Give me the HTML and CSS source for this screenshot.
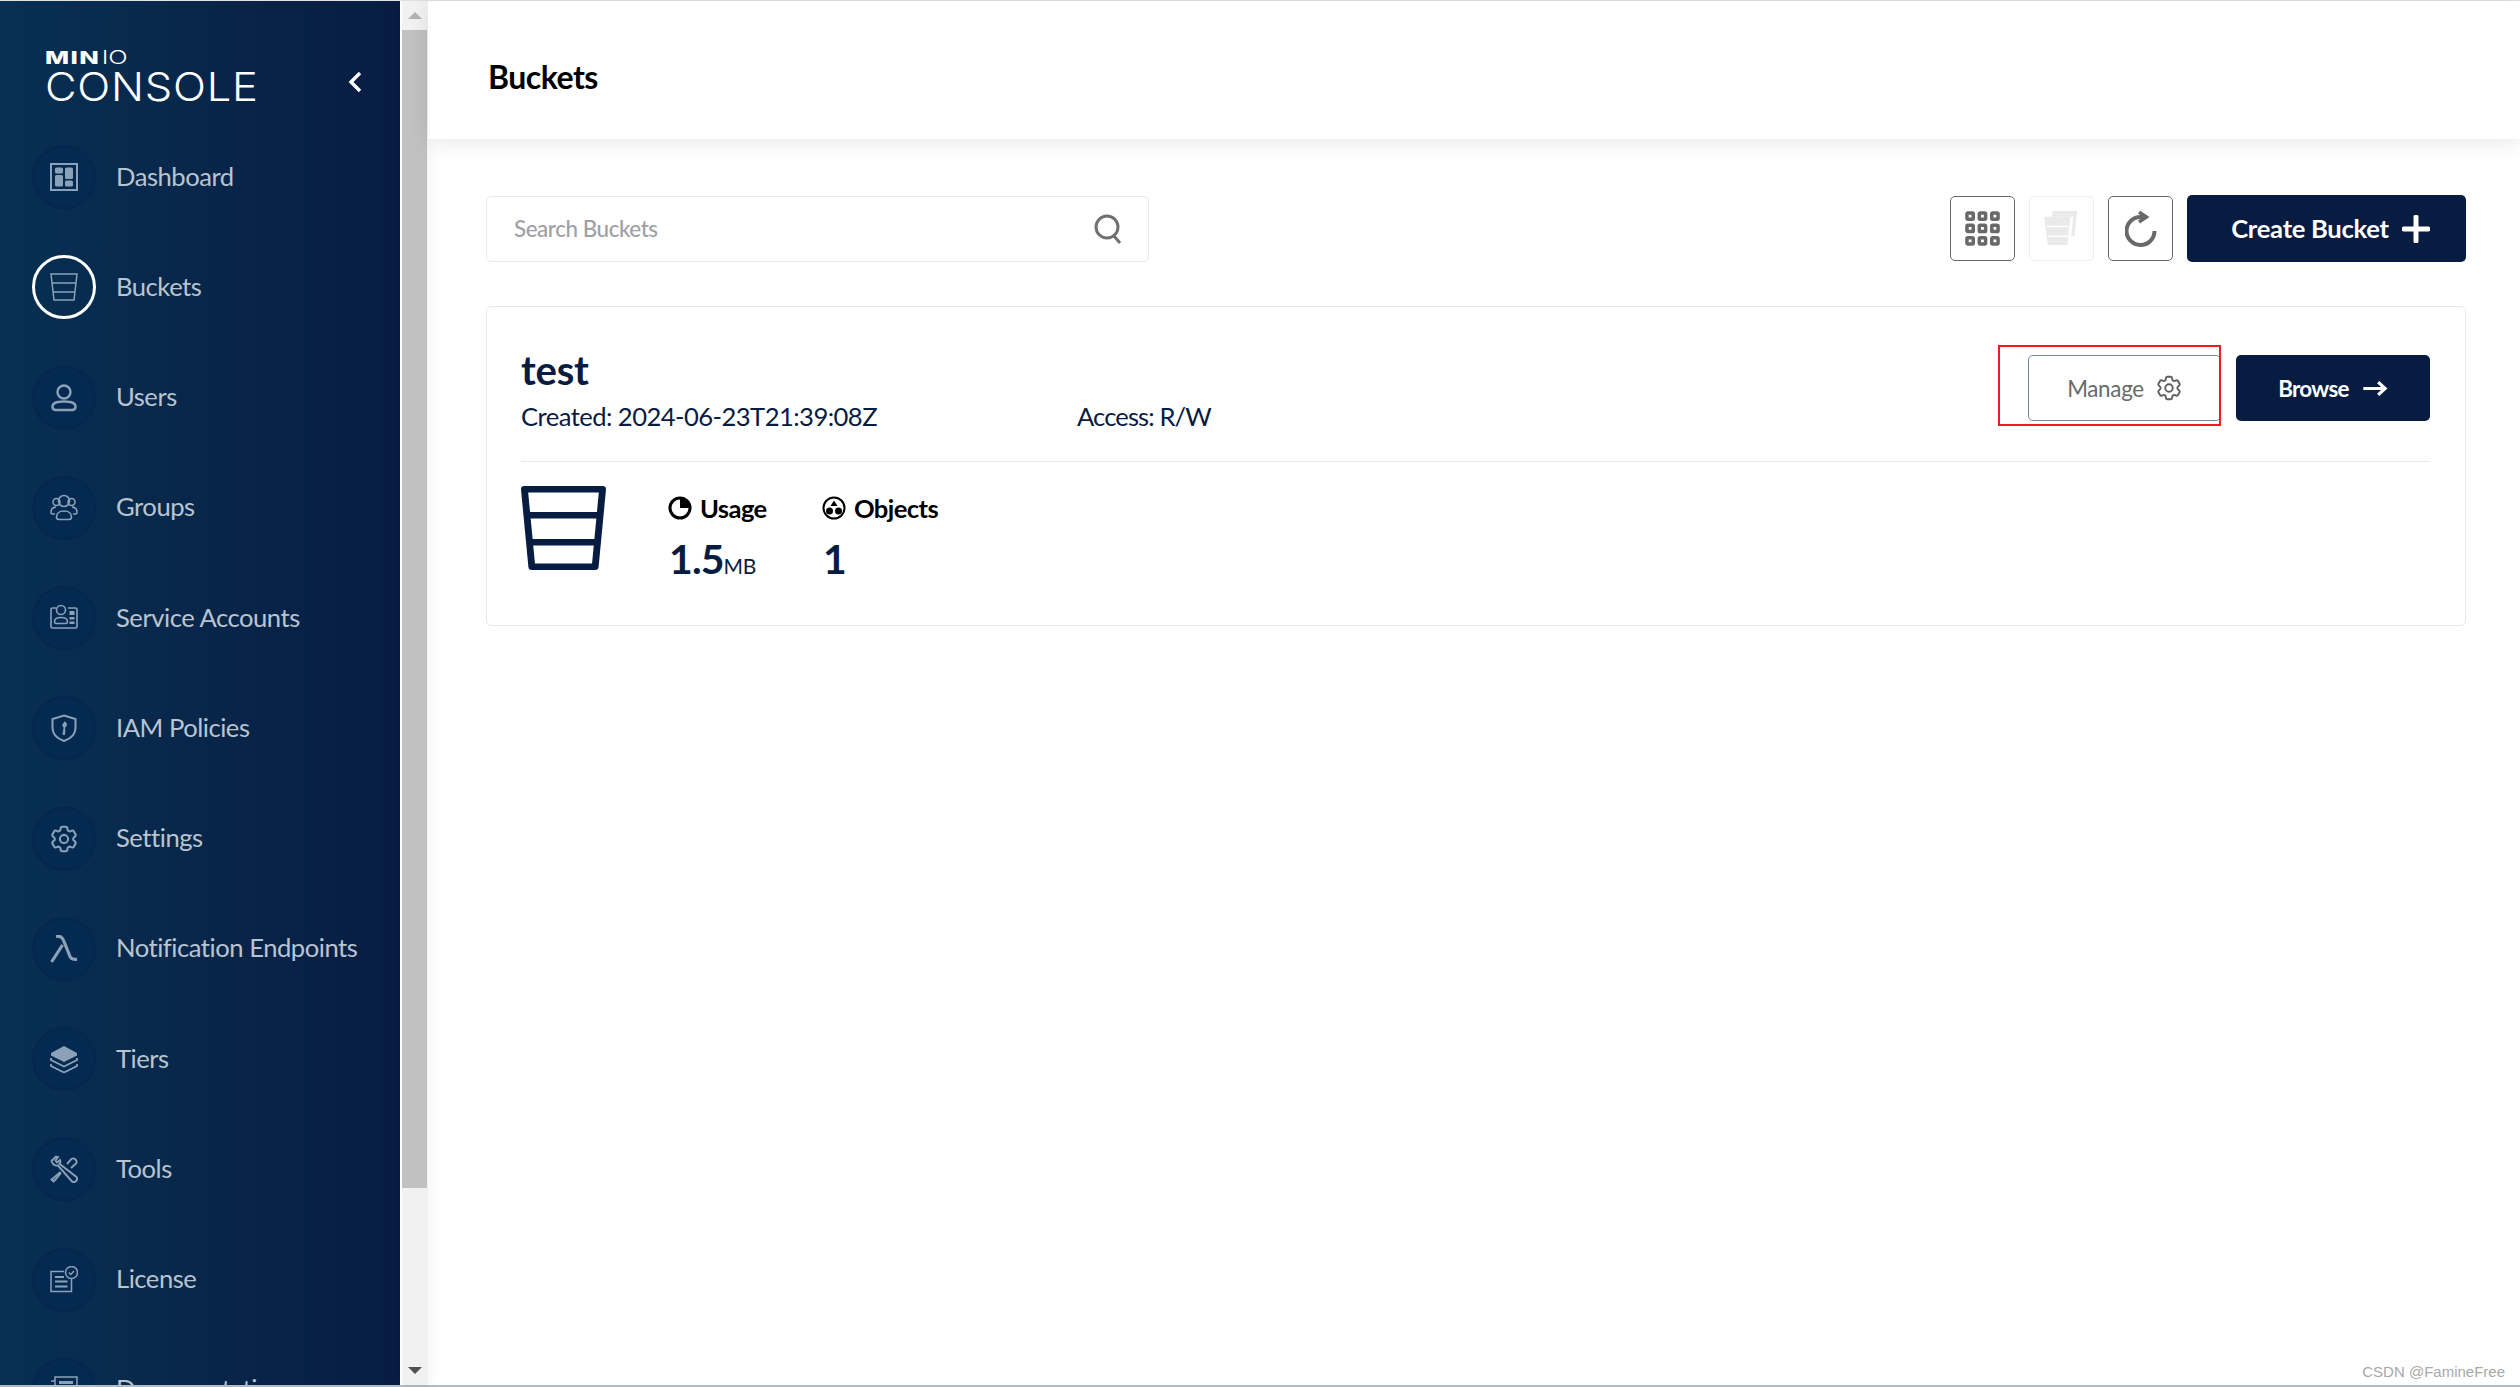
FILE: index.html
```html
<!DOCTYPE html>
<html lang="en">
<head>
<meta charset="utf-8">
<title>MinIO Console - Buckets</title>
<link rel="stylesheet" href="styles.css">
</head>
<body>
<svg class="defs" width="0" height="0">
  <symbol id="gear" viewBox="0 0 24 24"><path d="M9.594 3.94c.09-.542.56-.94 1.11-.94h2.593c.55 0 1.02.398 1.11.94l.213 1.281c.063.374.313.686.645.87.074.04.147.083.22.127.325.196.72.257 1.075.124l1.217-.456a1.125 1.125 0 0 1 1.37.49l1.296 2.247a1.125 1.125 0 0 1-.26 1.431l-1.003.827c-.293.241-.438.613-.43.992a7.723 7.723 0 0 1 0 .255c-.008.378.137.75.43.991l1.004.827c.424.35.534.955.26 1.43l-1.298 2.247a1.125 1.125 0 0 1-1.369.491l-1.217-.456c-.355-.133-.75-.072-1.076.124a6.47 6.47 0 0 1-.22.128c-.331.183-.581.495-.644.869l-.213 1.281c-.09.543-.56.94-1.11.94h-2.594c-.55 0-1.019-.398-1.11-.94l-.213-1.281c-.062-.374-.312-.686-.644-.87a6.52 6.52 0 0 1-.22-.127c-.325-.196-.72-.257-1.076-.124l-1.217.456a1.125 1.125 0 0 1-1.369-.49l-1.297-2.247a1.125 1.125 0 0 1 .26-1.431l1.004-.827c.292-.24.437-.613.43-.991a6.932 6.932 0 0 1 0-.255c.007-.38-.138-.751-.43-.992l-1.004-.827a1.125 1.125 0 0 1-.26-1.43l1.297-2.247a1.125 1.125 0 0 1 1.37-.491l1.216.456c.356.133.751.072 1.076-.124.072-.044.146-.086.22-.128.332-.183.582-.495.644-.869l.214-1.28Z" fill="none" stroke="currentColor" stroke-width="1.5"/><circle cx="12" cy="12" r="3" fill="none" stroke="currentColor" stroke-width="1.5"/></symbol>
</svg>
<div class="topline"></div>
<div class="app">
  <aside class="sidebar">
    <div class="brand">
      <div class="logo">
        <div class="logo-min"><b>MIN</b><i>IO</i></div>
        <div class="logo-console">CONSOLE</div>
      </div>
      <svg class="collapse" viewBox="0 0 14 22"><path d="M12 2 3 11l9 9" fill="none" stroke="#fff" stroke-width="3.4"/></svg>
    </div>
    <nav class="nav">
      <a class="item"><span class="circle"><svg viewBox="0 0 28 28"><rect x="1" y="1" width="26" height="26" fill="none" stroke="currentColor" stroke-width="2"/><rect x="5" y="4.500" width="8" height="6" rx="1.500" fill="currentColor"/><rect x="5" y="12" width="8" height="11.500" rx="1.500" fill="currentColor"/><rect x="15" y="4.500" width="8" height="11.500" rx="1.500" fill="currentColor"/><rect x="15" y="17.500" width="8" height="6" rx="1.500" fill="currentColor"/></svg></span><span class="label">Dashboard</span></a>
      <a class="item active"><span class="circle"><svg viewBox="0 0 28 28"><path d="M1 1h26l-3 26H4ZM2 10h24M3 19h22" fill="none" stroke="currentColor" stroke-width="1.500"/></svg></span><span class="label">Buckets</span></a>
      <a class="item"><span class="circle"><svg viewBox="0 0 28 28"><circle cx="14" cy="8" r="6.500" fill="none" stroke="currentColor" stroke-width="2.400"/><path d="M2.500 22.500c0-3.500 5-5 11.500-5s11.500 1.500 11.500 5c0 2.500-1.500 3.500-3.500 3.500H6c-2 0-3.500-1-3.500-3.500Z" fill="none" stroke="currentColor" stroke-width="2.400"/></svg></span><span class="label">Users</span></a>
      <a class="item"><span class="circle"><svg viewBox="0 0 28 28"><g fill="none" stroke="currentColor" stroke-width="1.600"><circle cx="14" cy="7" r="5.500"/><circle cx="6.500" cy="8" r="3.500"/><circle cx="21.500" cy="8" r="3.500"/><path d="M6.500 23c0-3.500 3-6 7.500-6s7.500 2.500 7.500 6c0 1.500-1 2.500-2.500 2.500H9c-1.500 0-2.500-1-2.500-2.500Z"/><path d="M6 13c-3 .2-5 2.500-5 5.500 0 1 .8 1.500 1.500 1.500H5M22 13c3 .2 5 2.500 5 5.500 0 1-.8 1.500-1.500 1.500H23"/></g></svg></span><span class="label">Groups</span></a>
      <a class="item"><span class="circle"><svg viewBox="0 0 28 28"><g fill="none" stroke="currentColor" stroke-width="1.600"><path d="M6 4H2.500C1.500 4 1 4.500 1 5.500v17C1 23.500 1.500 24 2.500 24h23c1 0 1.500-.5 1.500-1.500v-17c0-1-.5-1.500-1.500-1.500H18"/><circle cx="11" cy="6" r="4.500"/><path d="M4.500 17.500c0-2.500 2.500-4 6.500-4s6.500 1.500 6.500 4c0 1-.6 2-2 2H6.500c-1.400 0-2-1-2-2Z"/></g><rect x="19.500" y="7" width="5" height="4" fill="currentColor"/><rect x="19.500" y="13" width="5" height="2.500" fill="currentColor"/><rect x="19.500" y="17.500" width="5" height="2.500" fill="currentColor"/></svg></span><span class="label">Service Accounts</span></a>
      <a class="item"><span class="circle"><svg viewBox="0 0 28 28"><path d="M14 1.500 25.500 5v9c0 6-4.500 10.500-11.500 13C7 24.500 2.500 20 2.500 14V5Z" fill="none" stroke="currentColor" stroke-width="2"/><path d="M14 7.500a3 3 0 0 1 2.200 5l-1 1V20l-1.200 1.500-1.500-1.500v-1.500l1-1-1-1 1-1v-2a3 3 0 0 1 .5-5Z" fill="currentColor"/></svg></span><span class="label">IAM Policies</span></a>
      <a class="item"><span class="circle"><svg viewBox="0 0 28 28"><use href="#gear" x="-2.400" y="-2.400" width="32.800" height="32.800"/></svg></span><span class="label">Settings</span></a>
      <a class="item"><span class="circle"><svg viewBox="0 0 28 28"><path d="M6 1.500c5-.8 6.500 1 8 5l6 15c1 2.700 3 3 7 2.800M12.500 10 1.500 27" fill="none" stroke="currentColor" stroke-width="3.200"/></svg></span><span class="label">Notification Endpoints</span></a>
      <a class="item"><span class="circle"><svg viewBox="0 0 28 28"><path d="M14 1 27 8v2.500L14 17 1 10.500V8Z" fill="currentColor"/><path d="M1 13v2l13 6.500L27 15v-2M1 19v2l13 6.500L27 21v-2" fill="none" stroke="currentColor" stroke-width="1.800"/></svg></span><span class="label">Tiers</span></a>
      <a class="item"><span class="circle"><svg viewBox="0 0 28 28"><g fill="none" stroke="currentColor" stroke-width="1.900"><path d="M1.500 6 6 1.500l2 .5-2.500 3.500L7 7.500l3-2.500c.5 1.500.3 3-.5 3.800L26.500 22c.800 1 .8 2.500 0 3.500l-1 1c-1 .8-2.500.8-3.500 0L8 10.500C5.500 11 3 10 1.500 6Z"/><path d="M17 9 21 4.500c1-1.500 3-1.500 4.500 0s1.500 3.500 0 4.500L21 13M10.500 17 4 22.500l-2.500 2 2 2 2-2L11 18"/></g></svg></span><span class="label">Tools</span></a>
      <a class="item"><span class="circle"><svg viewBox="0 0 28 28"><g fill="none" stroke="currentColor" stroke-width="1.500"><path d="M14 5.500H1v20h20.500V13"/><circle cx="21.500" cy="6.500" r="6"/><path d="m18.800 6.500 2 2 3.200-3.500"/></g><rect x="5" y="10" width="9" height="2" fill="currentColor"/><rect x="5" y="14.500" width="12.500" height="2" fill="currentColor"/><rect x="5" y="19.500" width="12.500" height="2" fill="currentColor"/></svg></span><span class="label">License</span></a>
      <a class="item"><span class="circle"><svg viewBox="0 0 28 28"><g fill="none" stroke="currentColor" stroke-width="1.500"><path d="M1 5h4v21h22V1H5v5"/></g><rect x="9" y="5" width="14" height="3" fill="currentColor"/></svg></span><span class="label">Documentation</span></a>
    </nav>
  </aside>
  <div class="rail">
    <div class="rail-btn"><span class="tri-up"></span></div>
    <div class="rail-thumb"></div>
    <div class="rail-rest"></div>
    <div class="rail-btn"><span class="tri-down"></span></div>
  </div>
  <main class="main">
    <header class="header"><h1 class="title">Buckets</h1></header>
    <section class="toolbar">
      <div class="search">
        <span class="placeholder">Search Buckets</span>
        <svg class="search-icon" viewBox="0 0 28 30"><circle cx="13" cy="13" r="11" fill="none" stroke="#707070" stroke-width="3"/><path d="m20 22 6 7" fill="none" stroke="#707070" stroke-width="3"/></svg>
      </div>
      <div class="actions">
        <button class="icon-btn"><svg class="ico-grid" viewBox="0 0 36 36"><g fill="none" stroke="#696969" stroke-width="3.600"><rect x="2" y="2" width="6.500" height="6.500" rx="1"/><rect x="14.700" y="2" width="6.500" height="6.500" rx="1"/><rect x="27.500" y="2" width="6.500" height="6.500" rx="1"/><rect x="2" y="14.700" width="6.500" height="6.500" rx="1"/><rect x="14.700" y="14.700" width="6.500" height="6.500" rx="1"/><rect x="27.500" y="14.700" width="6.500" height="6.500" rx="1"/><rect x="2" y="27.500" width="6.500" height="6.500" rx="1"/><rect x="14.700" y="27.500" width="6.500" height="6.500" rx="1"/><rect x="27.500" y="27.500" width="6.500" height="6.500" rx="1"/></g></svg></button>
        <button class="icon-btn disabled"><svg class="ico-multi" viewBox="0 0 36 36"><path d="M9 0h25l-2.500 26H28L30 6H8Z" fill="#eaeaea"/><path d="M0 6h27l-3 29H4Z" fill="#eaeaea"/><path d="M3 16h22M4 26h20" stroke="#fff" stroke-width="1.600"/></svg></button>
        <button class="icon-btn"><svg class="ico-refresh" viewBox="0 0 32 36"><path d="M29.500 20A14 14 0 1 1 16 6h5" fill="none" stroke="#696969" stroke-width="4"/><path d="m14 1 7.500 5-7.500 5" fill="none" stroke="#696969" stroke-width="3.400"/></svg></button>
        <button class="primary create"><span>Create Bucket</span><svg class="ico-plus" viewBox="0 0 28 28"><path d="M14 2v24M2 14h24" stroke="#fff" stroke-width="5" stroke-linecap="round"/></svg></button>
      </div>
    </section>
    <article class="card">
      <div class="card-head">
        <div class="card-info">
          <h2 class="bucket-name">test</h2>
          <div class="meta"><span class="meta-created">Created: 2024-06-23T21:39:08Z</span><span class="meta-access">Access: R/W</span></div>
        </div>
        <div class="card-actions">
          <button class="manage"><span>Manage</span><svg class="ico-gear"><use href="#gear"/></svg></button>
          <button class="primary browse"><span>Browse</span><svg class="ico-arrow" viewBox="0 0 24 16"><path d="M1 8h20M15 2l6.500 6-6.500 6" fill="none" stroke="#fff" stroke-width="3"/></svg></button>
        </div>
      </div>
      <div class="card-stats">
        <svg class="big-bucket" viewBox="1.750 .75 80.500 82.500" preserveAspectRatio="none"><path d="M5 4h74l-7 76H12ZM7 29.500h70M9.500 56h65" fill="none" stroke="#081C42" stroke-width="6.500" stroke-linejoin="round"/></svg>
        <div class="stat stat-usage">
          <div class="stat-label"><svg class="stat-ico" viewBox="0 0 24 24"><circle cx="12" cy="12" r="10" fill="none" stroke="#000" stroke-width="3"/><path d="M12 2v10h10A10 10 0 0 0 12 2Z" fill="#000"/></svg><span>Usage</span></div>
          <div class="stat-value">1.5<small>MB</small></div>
        </div>
        <div class="stat">
          <div class="stat-label"><svg class="stat-ico" viewBox="0 0 24 24"><circle cx="12" cy="12" r="10.500" fill="none" stroke="#000" stroke-width="2"/><path d="m12 4.500 3.500 5.500h-7Z" fill="#000"/><circle cx="7.500" cy="15" r="3.500" fill="#000"/><circle cx="16.500" cy="15" r="3.500" fill="#000"/></svg><span>Objects</span></div>
          <div class="stat-value">1</div>
        </div>
      </div>
    </article>
  </main>
</div>
<div class="bottomline"></div>
<div class="highlight"></div>
<div class="watermark">CSDN @FamineFree</div>
</body>
</html>
```
FILE: styles.css
```css
* { box-sizing: border-box; }
html, body { margin: 0; height: 100%; overflow: hidden; }
body {
  display: flex;
  flex-direction: column;
  font-family: "Lato", "Liberation Sans", sans-serif;
  background: #fff;
  color: #081c42;
  position: relative;
}
.defs { position: absolute; }
.topline { height: 1px; background: #e2e2e2; flex: none; }
.bottomline { height: 2px; background: #b0b9c6; flex: none; }
.app { flex: 1; display: flex; min-height: 0; }

.sidebar {
  width: 400px;
  flex: none;
  background: linear-gradient(90deg, #073052 0%, #081c42 100%);
  overflow: hidden;
}
.brand {
  height: 121px;
  padding: 49px 38px 0 45px;
  display: flex;
  justify-content: space-between;
  align-items: flex-start;
}
.logo { color: #fff; }
.logo-min {
  font-family: "Inter", sans-serif;
  font-size: 18px;
  line-height: 15px;
  height: 15px;
  transform: scaleX(1.42);
  transform-origin: left center;
  white-space: nowrap;
}
.logo-min b { font-weight: 800; letter-spacing: 1px; }
.logo-min i { font-style: normal; font-weight: 300; margin-left: 1px; }
.logo-console {
  font-family: "Inter", sans-serif;
  font-weight: 300;
  font-size: 40px;
  line-height: 42px;
  margin-top: 1px;
  letter-spacing: .7px;
  transform: scaleX(1.085);
  transform-origin: left center;
}
.collapse { width: 14px; height: 22px; margin-top: 21px; }
.item {
  height: 110.25px;
  display: flex;
  align-items: center;
  padding-left: 32px;
  gap: 20px;
}
.circle {
  width: 64px;
  height: 64px;
  flex: none;
  border-radius: 50%;
  background: #042a52;
  border: 2px solid #05264d;
  display: flex;
  align-items: center;
  justify-content: center;
  color: #8ba1b8;
}
.circle svg { width: 28px; height: 28px; display: block; }
.item.active .circle { border: 3px solid #fff; background: transparent; }
.label { font-size: 25.6px; color: #b9c4d1; letter-spacing: -.47px; white-space: nowrap; margin-bottom: 3px; }

.rail {
  width: 28px;
  flex: none;
  display: flex;
  flex-direction: column;
  background: #f1f1f1;
  border-left: 2px solid #fff;
  box-shadow: 4px 0 12px rgba(0, 0, 0, .04);
  position: relative;
}
.rail-btn { height: 29px; display: flex; align-items: center; justify-content: center; flex: none; }
.rail-thumb { height: 1158px; width: 25px; background: #c1c1c1; flex: none; }
.rail-rest { flex: 1; }
.tri-up { border: 7px solid transparent; border-top: 0; border-bottom: 7px solid #b4b4b4; }
.tri-down { border: 7px solid transparent; border-bottom: 0; border-top: 7px solid #505050; }

.main { flex: 1; min-width: 0; display: flex; flex-direction: column; padding: 0 54px 0 58px; }
.header {
  height: 138px;
  margin: 0 -54px 0 -58px;
  padding: 12px 0 0 60px;
  background: #fff;
  box-shadow: 0 4px 20px rgba(0, 0, 0, .09);
  display: flex;
  align-items: center;
  position: relative;
  flex: none;
}
.title { margin: 0; font-size: 32px; font-weight: 700; color: #000; letter-spacing: -.5px; }
.toolbar {
  margin-top: 56px;
  display: flex;
  justify-content: space-between;
  align-items: center;
  height: 67px;
}
.search {
  width: 663px;
  height: 66px;
  border: 1px solid #eaeaea;
  border-radius: 5px;
  padding: 0 28px 0 27px;
  display: flex;
  align-items: center;
  justify-content: space-between;
}
.placeholder { font-size: 22.4px; font-weight: 500; color: #a0a0a4; letter-spacing: -.45px; }
.search-icon { width: 28px; height: 30px; margin-right: -2px; }
.actions { display: flex; align-items: center; }
.icon-btn {
  width: 65px;
  height: 65px;
  margin-right: 14px;
  padding: 0;
  background: #fff;
  border: 1px solid #696969;
  border-radius: 5px;
  display: flex;
  align-items: center;
  justify-content: center;
}
.icon-btn.disabled { border-color: #eeeeee; }
.ico-grid { width: 35px; height: 35px; }
.ico-multi { width: 35px; height: 35px; }
.ico-refresh { width: 32px; height: 36px; }
.primary {
  background: #081c42;
  color: #fff;
  border: 0;
  border-radius: 5px;
  font-family: inherit;
  display: flex;
  align-items: center;
  justify-content: center;
  padding: 0;
}
.create { width: 279px; height: 67px; padding-left: 8px; font-size: 25.6px; font-weight: 700; gap: 13px; letter-spacing: -.3px; }
.create span { margin-bottom: 2px; }
.ico-plus { width: 28px; height: 28px; }

.card {
  margin-top: 44px;
  height: 320px;
  border: 1px solid #e8e8e8;
  border-radius: 5px;
  padding: 0 35px 0 34px;
}
.card-head {
  height: 155px;
  border-bottom: 1px solid #eaeaea;
  display: flex;
  justify-content: space-between;
  align-items: flex-start;
}
.bucket-name { margin: 39px 0 0; font-size: 40px; line-height: 48px; font-weight: 700; letter-spacing: -.2px; }
.meta { font-size: 25.6px; line-height: 38px; display: flex; margin-top: 3px; letter-spacing: -.55px; }
.meta-created { width: 556px; }
.meta-access { letter-spacing: -.9px; }
.card-actions { display: flex; gap: 15px; margin-top: 48px; }
.manage {
  width: 193px;
  height: 66px;
  background: #fff;
  border: 1px solid #7a869e;
  border-radius: 5px;
  color: #696969;
  font-family: inherit;
  font-size: 22.4px;
  letter-spacing: -.3px;
  display: flex;
  align-items: center;
  justify-content: center;
  gap: 10px;
  padding: 0 0 0 2px;
}
.ico-gear { width: 30px; height: 30px; color: #5f5f5f; }
.browse { width: 194px; height: 66px; font-size: 22.4px; font-weight: 700; gap: 13px; letter-spacing: -.7px; }
.ico-arrow { width: 26px; height: 17px; }
.card-stats { display: flex; padding-top: 24px; }
.big-bucket { width: 85px; height: 84px; flex: none; }
.stat { display: flex; flex-direction: column; margin-top: 7px; }
.stat-usage { width: 154px; margin-left: 62px; }
.stat-label { display: flex; align-items: center; gap: 8px; font-size: 25.6px; font-weight: 700; color: #000; line-height: 30px; letter-spacing: -.6px; }
.stat-ico { width: 24px; height: 24px; }
.stat-value { font-size: 41px; line-height: 56px; font-weight: 700; margin: 8px 0 0 1px; letter-spacing: -.9px; }
.stat-value small { font-size: 21px; font-weight: 400; letter-spacing: -.4px; }

.highlight {
  position: absolute;
  left: 1998px;
  top: 345px;
  width: 223px;
  height: 81px;
  border: 2px solid #f01c24;
  pointer-events: none;
}
.watermark {
  position: absolute;
  right: 15px;
  bottom: 7px;
  font-family: "Liberation Sans", sans-serif;
  font-size: 15px;
  color: #a8a8a8;
}
```
